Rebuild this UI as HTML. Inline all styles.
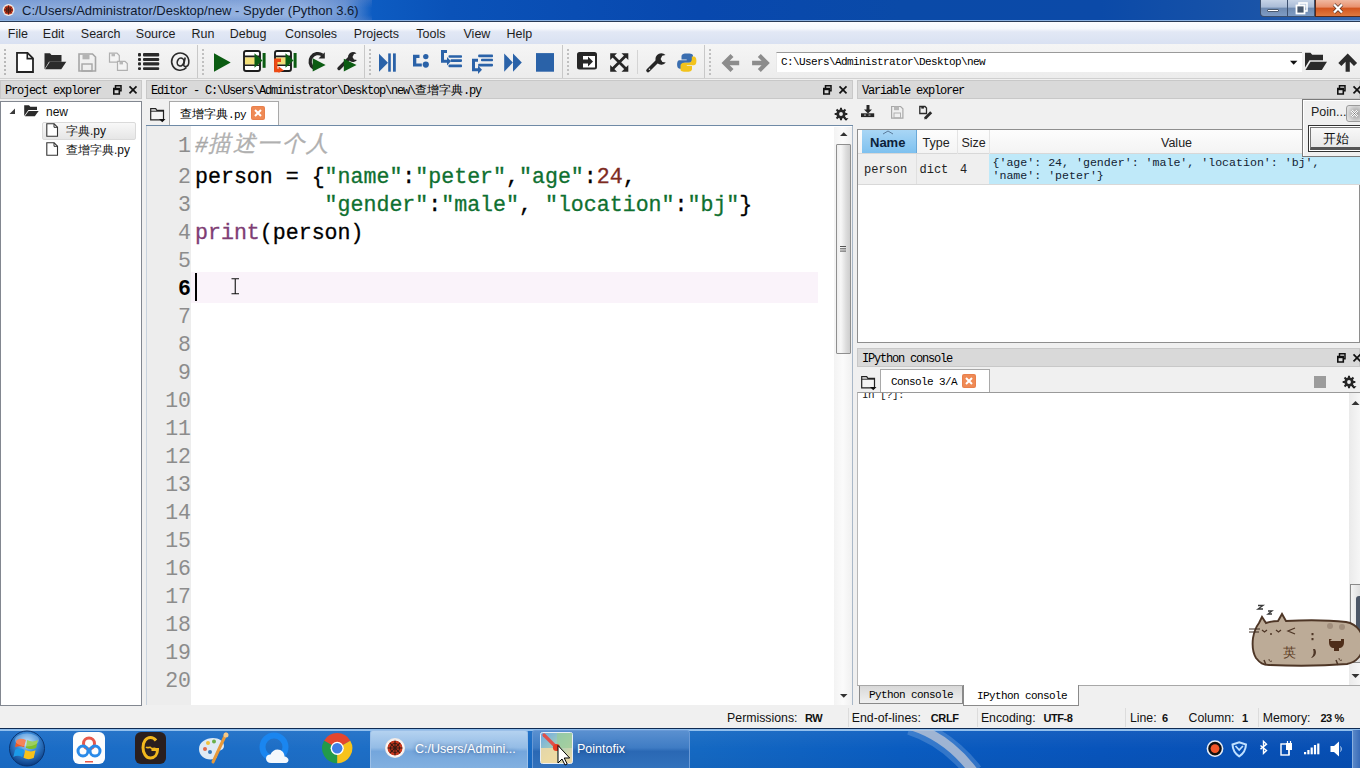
<!DOCTYPE html>
<html><head><meta charset="utf-8">
<style>
*{margin:0;padding:0;box-sizing:border-box}
html,body{width:1360px;height:768px;overflow:hidden;background:#f0f0f0;font-family:"Liberation Sans",sans-serif;font-size:13px;color:#000}
.a{position:absolute}
.mono{font-family:"Liberation Mono",monospace}
.serif{font-family:"Liberation Serif",serif}
svg{position:absolute;overflow:visible}
#title{left:0;top:0;width:1360px;height:21px;background:linear-gradient(90deg,#4a7cc8 0px,#3a72c4 300px,#0d5cc2 372px,#0a52b8 450px,#0848ae 700px,#0a4aa8 900px,#0b4aa8 1100px,#1a54a8 1260px,#3a68ac 1360px)}
#menu{left:0;top:22px;width:1360px;height:22px;background:linear-gradient(#fdfdff 0,#f6f8fc 30%,#e2e8f5 45%,#d9e1f2 100%)}
#tool{left:0;top:44px;width:1360px;height:35px;background:linear-gradient(#f5f5f5,#ececec);border-bottom:1px solid #d0d0d0}
.dh{height:19px;top:80px;background:#d9d9d9;border:1px solid #c8c8c8;font-family:"Liberation Mono",monospace;font-size:12px;letter-spacing:-1.2px;line-height:20px;padding-left:4px;color:#000;white-space:nowrap}
.panel{background:#fff;border:1px solid #828790}
.ln{left:147px;width:44px;text-align:right;font-size:21.5px;line-height:28px;white-space:pre}
.code{left:195px;font-size:21.6px;line-height:28px;white-space:pre;color:#000;-webkit-text-stroke:0.3px currentColor}
.vtxt{font-size:11.4px;line-height:13px;color:#222;white-space:nowrap}
.stt{top:711px;font-size:12.3px;color:#111;white-space:nowrap}
.stb{font-size:11px;font-weight:bold;top:712px;letter-spacing:-0.4px}
.menuitem{top:27px;font-size:12.5px;color:#1e1e1e;white-space:nowrap}
</style></head>
<body>
<div id="title" class="a"></div>
<div class="a" style="left:0;top:0;width:372px;height:20px;background:linear-gradient(90deg,rgba(150,178,222,.85) 0,rgba(165,190,230,.85) 300px,rgba(140,170,220,.7) 345px,rgba(120,160,220,0) 372px)"></div>
<div class="a" style="left:0;top:0;width:372px;height:20px;background:linear-gradient(rgba(90,130,200,.35),rgba(255,255,255,0) 40%,rgba(255,255,255,0) 75%,rgba(90,130,200,.3))"></div>
<div class="a" style="left:0;top:20px;width:1360px;height:1px;background:#8ab0e0"></div>
<div class="a" style="left:0;top:21px;width:1360px;height:1px;background:#283a55"></div>
<svg style="left:2px;top:4px" width="13" height="12"><circle cx="6.5" cy="6" r="6" fill="#f2ece8"/><circle cx="6.5" cy="6" r="4.6" fill="#c8381e"/><g stroke="#3a1a12" stroke-width=".8" fill="none"><path d="M6.5 1.4v9.2M1.9 6h9.2M3.2 2.7l6.6 6.6M9.8 2.7L3.2 9.3"/><circle cx="6.5" cy="6" r="2.4"/></g></svg>
<div class="a" style="left:22px;top:3px;font-size:13px;color:#0f1a30;white-space:nowrap">C:/Users/Administrator/Desktop/new - Spyder (Python 3.6)</div>
<div class="a" style="left:1260px;top:0;width:28px;height:17px;border:1px solid #3b4f6e;border-top:none;border-radius:0 0 0 4px;background:linear-gradient(#c6d3e6,#a9bbd6 45%,#6f8ab0 50%,#7e9cc4)"></div>
<div class="a" style="left:1267px;top:9px;width:12px;height:3px;background:#fff;border:1px solid #4a5a70;border-radius:1px"></div>
<div class="a" style="left:1288px;top:0;width:27px;height:17px;border:1px solid #3b4f6e;border-top:none;border-left:none;background:linear-gradient(#c6d3e6,#a9bbd6 45%,#6f8ab0 50%,#7e9cc4)"></div>
<svg style="left:1295px;top:2px" width="13" height="12"><rect x="4" y="1" width="8" height="8" fill="none" stroke="#fff" stroke-width="1.6"/><rect x="1.5" y="3.5" width="8" height="8" fill="#4a5a70" stroke="#fff" stroke-width="1.8"/><rect x="3.8" y="5.8" width="3.4" height="3.4" fill="#4a5a70"/></svg>
<div class="a" style="left:1315px;top:0;width:45px;height:17px;border:1px solid #5a2a1a;border-top:none;border-right:none;background:linear-gradient(#f0b8a0,#e8906c 45%,#d2541e 50%,#e07a40)"></div>
<svg style="left:1332px;top:3px" width="12" height="11"><path d="M2 1.5L10 9.5M10 1.5L2 9.5" stroke="#4a2a20" stroke-width="3.6"/><path d="M2 1.5L10 9.5M10 1.5L2 9.5" stroke="#fff" stroke-width="2.4"/></svg>
<div id="menu" class="a"></div>
<div class="a menuitem" style="left:7.800000000000001px">File</div>
<div class="a menuitem" style="left:42.8px">Edit</div>
<div class="a menuitem" style="left:80.8px">Search</div>
<div class="a menuitem" style="left:135.8px">Source</div>
<div class="a menuitem" style="left:191.5px">Run</div>
<div class="a menuitem" style="left:229.7px">Debug</div>
<div class="a menuitem" style="left:285.0px">Consoles</div>
<div class="a menuitem" style="left:353.8px">Projects</div>
<div class="a menuitem" style="left:416.3px">Tools</div>
<div class="a menuitem" style="left:463.5px">View</div>
<div class="a menuitem" style="left:506.5px">Help</div>
<div class="a" style="left:0;top:44px;width:1360px;height:1px;background:#c9cfd8"></div>
<div id="tool" class="a"></div>
<div class="a" style="left:776px;top:52px;width:526px;height:20px;background:#fff;border-top:1px solid #9a9a9a;border-left:1px solid #e8e8e8"></div>
<svg style="left:0;top:0" width="1360" height="80">
<g fill="#b8b8b8"><!-- grips -->
<rect x="4" y="49" width="2" height="2"/><rect x="4" y="53" width="2" height="2"/><rect x="4" y="57" width="2" height="2"/><rect x="4" y="61" width="2" height="2"/><rect x="4" y="65" width="2" height="2"/><rect x="4" y="69" width="2" height="2"/><rect x="4" y="73" width="2" height="2"/>
</g>
<g fill="#c0c0c0">
<rect x="202" y="49" width="2" height="2"/><rect x="202" y="53" width="2" height="2"/><rect x="202" y="57" width="2" height="2"/><rect x="202" y="61" width="2" height="2"/><rect x="202" y="65" width="2" height="2"/><rect x="202" y="69" width="2" height="2"/><rect x="202" y="73" width="2" height="2"/>
<rect x="369" y="49" width="2" height="2"/><rect x="369" y="53" width="2" height="2"/><rect x="369" y="57" width="2" height="2"/><rect x="369" y="61" width="2" height="2"/><rect x="369" y="65" width="2" height="2"/><rect x="369" y="69" width="2" height="2"/><rect x="369" y="73" width="2" height="2"/>
<rect x="567" y="49" width="2" height="2"/><rect x="567" y="53" width="2" height="2"/><rect x="567" y="57" width="2" height="2"/><rect x="567" y="61" width="2" height="2"/><rect x="567" y="65" width="2" height="2"/><rect x="567" y="69" width="2" height="2"/><rect x="567" y="73" width="2" height="2"/>
<rect x="709" y="49" width="2" height="2"/><rect x="709" y="53" width="2" height="2"/><rect x="709" y="57" width="2" height="2"/><rect x="709" y="61" width="2" height="2"/><rect x="709" y="65" width="2" height="2"/><rect x="709" y="69" width="2" height="2"/><rect x="709" y="73" width="2" height="2"/>
</g>
<g fill="#c8c8c8"><rect x="197" y="45" width="1" height="33"/><rect x="364" y="45" width="1" height="33"/><rect x="562" y="45" width="1" height="33"/><rect x="704" y="45" width="1" height="33"/><rect x="637" y="50" width="1" height="24" fill="#d4d4d4"/></g>
<!-- new file -->
<path d="M17 52.8h10.5l5.5 5.5v13.7h-16z" fill="#fff" stroke="#222" stroke-width="1.8" stroke-linejoin="miter"/>
<path d="M27.3 53v5.6h5.6" fill="none" stroke="#222" stroke-width="1.6"/>
<!-- open folder -->
<path d="M44.5 53.3h5.5l1.5 1.8h10v6.6h-12.5l-4.5 7.5z" fill="#2b2b2b"/>
<path d="M45 69.3l4.8-7.6h16.5l-5 7.6z" fill="#2b2b2b"/>
<!-- save disabled -->
<path d="M79 54h13.5l3 3v14h-16.5z" fill="none" stroke="#a6a6a6" stroke-width="1.6"/>
<rect x="82.5" y="54.5" width="7" height="4.8" fill="#b4b4b4"/>
<rect x="82" y="64" width="10" height="7" fill="none" stroke="#a6a6a6" stroke-width="1.4"/>
<!-- save all disabled -->
<path d="M109.5 53.2h7.5l2.3 2.3v6.7h-9.8z" fill="#f4f4f4" stroke="#b0b0b0" stroke-width="1.2"/>
<rect x="111.5" y="53.5" width="3.5" height="2.8" fill="#b8b8b8"/>
<path d="M117.5 61.3h7.5l2.3 2.3v6.7h-9.8z" fill="#f4f4f4" stroke="#b0b0b0" stroke-width="1.2"/>
<rect x="119.5" y="61.6" width="3.5" height="2.8" fill="#b8b8b8"/>
<!-- outline list -->
<g fill="#2a2a2a"><rect x="138" y="53" width="3" height="3.6" rx="1"/><rect x="143" y="53" width="16.2" height="3.6" rx="1"/>
<rect x="138" y="58.1" width="3" height="2.8" rx="1"/><rect x="143" y="58.1" width="16.2" height="2.8" rx="1"/>
<rect x="138" y="62.3" width="3" height="3.3" rx="1"/><rect x="143" y="62.3" width="16.2" height="3.3" rx="1"/>
<rect x="138" y="67.2" width="3" height="2.8" rx="1"/><rect x="143" y="67.2" width="16.2" height="2.8" rx="1"/></g>
<!-- @ -->
<path d="M186.5 67.5A8.6 8.6 0 1 1 188.8 62c0 3-1.5 4.6-3.3 4.6-1.5 0-2-1-1.7-2.6l1.4-6.5" fill="none" stroke="#2a2a2a" stroke-width="1.6"/><ellipse cx="180.6" cy="62" rx="3.3" ry="4" transform="rotate(20 180.6 62)" fill="none" stroke="#2a2a2a" stroke-width="1.6"/>
<!-- run -->
<path d="M214 53.3L230.7 62.5L214 71.8z" fill="#0b5c12"/>
<!-- run cell -->
<rect x="244" y="51" width="16" height="20" rx="2" fill="#fff" stroke="#1e1e1e" stroke-width="1.9"/>
<rect x="245" y="57.3" width="14" height="7.4" fill="#f3df79"/>
<path d="M244 56.4h16M244 65.3h16" stroke="#1e1e1e" stroke-width="1.6"/>
<path d="M254.5 53.3L262.5 60.5L254.5 67.8z" fill="#0b5c12"/><rect x="262.6" y="53" width="3" height="14.8" fill="#0b5c12"/>
<!-- run cell advance -->
<rect x="275" y="51" width="16" height="20" rx="2" fill="#fff" stroke="#1e1e1e" stroke-width="1.9"/>
<rect x="276" y="57.3" width="14" height="7.4" fill="#f3df79"/>
<path d="M275 56.4h16M275 65.3h16" stroke="#1e1e1e" stroke-width="1.6"/>
<path d="M285.5 53.3L293.5 60.5L285.5 67.8z" fill="#0b5c12"/><rect x="293.6" y="53" width="3" height="14.8" fill="#0b5c12"/>
<path d="M281 60.2h-5.2v10.3h4" fill="none" stroke="#ee4a14" stroke-width="3.4"/><path d="M278.5 66.2l5.5 4.3-5.5 2.2z" fill="#ee4a14"/>
<!-- rerun -->
<path d="M322.5 55A7.6 7.6 0 1 0 313.5 68" fill="none" stroke="#262626" stroke-width="3.3"/>
<path d="M318.5 58.5h6.3v-6.3z" fill="#262626"/>
<path d="M312.7 58.2L325.6 65L312.7 71.6z" fill="#0b5c12"/>
<!-- debug file (wrench + play) -->
<path d="M339 68.5L349 58.5" stroke="#262626" stroke-width="3.4" stroke-linecap="round"/>
<path d="M356.5 53.5a5 5 0 1 0 0.5 6.5l-3-0.5-1.5-2.5 1.5-3z" fill="#262626"/>
<path d="M343.8 58.7L356.5 65L343.8 71.6z" fill="#0b5c12"/>
<!-- debug -->
<g fill="#2a62a8">
<path d="M379 53.8L388 62.7L379 71.7z"/><rect x="388.2" y="53.4" width="2.6" height="18.3"/><rect x="393" y="53.4" width="2.8" height="18.3"/>
<!-- step -->
<path d="M413 54.8h6.5v3.2h-3.2v5.4h5.5v3.2h-8.8z"/><circle cx="425.8" cy="56.6" r="2.7"/><circle cx="425.8" cy="64.6" r="3.1"/>
<!-- step into -->
<path d="M441 50h6v3h-3v6.8h3v-2.8l4 4.3-4 4.3v-2.8h-6z"/>
<rect x="448.5" y="55.2" width="13.5" height="2.6" rx=".8"/><rect x="450.5" y="59.3" width="11.5" height="2.6" rx=".8"/><rect x="448.5" y="64.6" width="13.5" height="2.6" rx=".8"/>
<!-- step return -->
<rect x="478.2" y="54.6" width="14.8" height="2.6" rx=".8"/><rect x="481" y="58.7" width="12" height="2.6" rx=".8"/><rect x="478.2" y="63.8" width="14.8" height="2.6" rx=".8"/>
<path d="M472 58.8h6v3h-3v6.4h3v-2.8l4 4.3-4 4.3v-2.8h-6z"/>
<!-- continue -->
<path d="M504.2 53.4L512.8 62.5L504.2 71.7z"/><path d="M513 53.4L521.8 62.5L513 71.7z"/>
<!-- stop -->
<rect x="536" y="53.1" width="18" height="18.6"/>
</g>
<!-- maximize pane -->
<rect x="578" y="53" width="18" height="15.6" rx="1.5" fill="#fff" stroke="#262626" stroke-width="2"/>
<rect x="578" y="53" width="18" height="3" fill="#262626"/>
<rect x="578.5" y="55" width="4.5" height="13.5" fill="#262626"/>
<path d="M583 59.5h5v-3l5 5-5 5v-3h-5z" fill="#262626"/>
<!-- fullscreen -->
<g stroke="#262626" stroke-width="2.8" fill="none"><path d="M612.5 55.5l13.5 13.5M626 55.5l-13.5 13.5"/></g>
<g fill="#262626"><path d="M610.2 53.2h6.8l-6.8 6.8z"/><path d="M628.3 53.2v6.8l-6.8-6.8z"/><path d="M610.2 71.8v-6.8l6.8 6.8z"/><path d="M628.3 71.8h-6.8l6.8-6.8z"/></g>
<!-- wrench -->
<path d="M648 70.5L657 61.5" stroke="#262626" stroke-width="3.6" stroke-linecap="round"/>
<path d="M665.5 55a5.8 5.8 0 1 0 0.3 7.5l-3.4-0.6-1.8-2.8 1.6-3.4z" fill="#262626"/>
<circle cx="649.5" cy="69.2" r=".8" fill="#ddd"/>
<!-- python -->
<path d="M686.5 53.6c-4.5 0-5 1.8-5 3.4v2.4h5.2v.8h-7.2c-2 0-2.4 2.4-2.4 4.4 0 2.3.8 4.2 2.6 4.2h2v-2.8c0-2 1.7-3.3 3.3-3.3h5c1.6 0 3-1.4 3-3v-3.8c0-1.7-1.7-2.3-6.5-2.3z" fill="#3a6eb0"/>
<path d="M687 71.8c4.5 0 5-1.8 5-3.4v-2.4h-5.2v-.8h7.2c2 0 2.4-2.4 2.4-4.4 0-2.3-.8-4.2-2.6-4.2h-2v2.8c0 2-1.7 3.3-3.3 3.3h-5c-1.6 0-3 1.4-3 3v3.8c0 1.7 1.7 2.3 6.5 2.3z" fill="#f2c31c"/>
<!-- back/forward -->
<path d="M730.5 54l-9 9 9 9 3-3-3.8-3.8h9.5v-4.4h-9.5l3.8-3.8z" fill="#8c8c8c"/>
<path d="M760.8 54l9 9-9 9-3-3 3.8-3.8h-9.5v-4.4h9.5l-3.8-3.8z" fill="#8c8c8c"/>
<!-- combo arrow -->
<path d="M1290 60.8h7.4l-3.7 3.9z" fill="#111"/>
<!-- open folder right -->
<path d="M1305 52.8h5.5l1.7 2h10.8v5.5h-13.5l-4.5 7.2z" fill="#2b2b2b"/>
<path d="M1305.5 70l5-8.2h16.5l-5.2 8.2z" fill="#2b2b2b"/>
<!-- up arrow -->
<path d="M1347.7 53.5l-9.4 9.4 3.1 3.1 4.2-4.2v10h4.2v-10l4.2 4.2 3.1-3.1z" fill="#2b2b2b"/>
</svg>
<div class="a mono" style="left:781px;top:56px;font-size:11px;letter-spacing:-0.6px;color:#000;white-space:nowrap;line-height:12px">C:\Users\Administrator\Desktop\new</div>

<!-- dock headers -->
<div class="a dh" style="left:0;width:142px">Project explorer</div>
<div class="a dh" style="left:146px;width:707px">Editor - C:\Users\Administrator\Desktop\new\<span style="font-size:12.3px;letter-spacing:0">查增字典</span>.py</div>
<div class="a dh" style="left:857px;width:503px">Variable explorer</div>
<div class="a dh" style="left:857px;top:348px;width:503px">IPython console</div>

<!-- project explorer -->
<svg style="left:113px;top:85px" width="26" height="10"><path d="M2.5 0.8h5.5v5h-5.5z" fill="none" stroke="#111" stroke-width="1.5"/><path d="M0.8 3.5h5.5v5.5h-5.5z" fill="#d9d9d9" stroke="#111" stroke-width="1.6"/><path d="M0.8 4.3h5.5" stroke="#111" stroke-width="1.8"/><path d="M16.5 1.3l7 7M23.5 1.3l-7 7" stroke="#111" stroke-width="1.7"/></svg>
<svg style="left:823px;top:85px" width="26" height="10"><path d="M2.5 0.8h5.5v5h-5.5z" fill="none" stroke="#111" stroke-width="1.5"/><path d="M0.8 3.5h5.5v5.5h-5.5z" fill="#d9d9d9" stroke="#111" stroke-width="1.6"/><path d="M0.8 4.3h5.5" stroke="#111" stroke-width="1.8"/><path d="M16.5 1.3l7 7M23.5 1.3l-7 7" stroke="#111" stroke-width="1.7"/></svg>
<svg style="left:1337px;top:85px" width="26" height="10"><path d="M2.5 0.8h5.5v5h-5.5z" fill="none" stroke="#111" stroke-width="1.5"/><path d="M0.8 3.5h5.5v5.5h-5.5z" fill="#d9d9d9" stroke="#111" stroke-width="1.6"/><path d="M0.8 4.3h5.5" stroke="#111" stroke-width="1.8"/><path d="M16.5 1.3l7 7M23.5 1.3l-7 7" stroke="#111" stroke-width="1.7"/></svg>
<svg style="left:1337px;top:353px" width="26" height="10"><path d="M2.5 0.8h5.5v5h-5.5z" fill="none" stroke="#111" stroke-width="1.5"/><path d="M0.8 3.5h5.5v5.5h-5.5z" fill="#d9d9d9" stroke="#111" stroke-width="1.6"/><path d="M0.8 4.3h5.5" stroke="#111" stroke-width="1.8"/><path d="M16.5 1.3l7 7M23.5 1.3l-7 7" stroke="#111" stroke-width="1.7"/></svg>
<div class="a panel" style="left:0;top:101px;width:142px;height:605px"></div>
<svg style="left:9px;top:108px" width="7" height="7"><path d="M6 0.5V6H0.5z" fill="#3a3a3a"/></svg>
<svg style="left:24px;top:105px" width="16" height="12"><path d="M0.2 0.2h4.8l1.3 1.6h6.7v3.2h-8.6l-4.2 6z" fill="#2b2b2b"/><path d="M0.8 11.2l3.9-5.2h10l-3.9 5.2z" fill="#2b2b2b"/></svg>
<div class="a" style="left:46px;top:105px;font-size:12px;color:#111">new</div>
<div class="a" style="left:42px;top:121.5px;width:94px;height:18px;border:1px solid #dadada;border-radius:2px;background:linear-gradient(#f8f8f8,#e6e6e6)"></div>
<svg style="left:46px;top:123px" width="13" height="14"><path d="M0.8 0.8h7.3l3.4 3.4v9h-10.7z" fill="#fff" stroke="#333" stroke-width="1.1"/><path d="M8 0.8v3.5h3.5" fill="none" stroke="#333" stroke-width="1"/></svg>
<div class="a" style="left:66px;top:123px;font-size:12px;color:#111;white-space:nowrap">字典.py</div>
<svg style="left:46px;top:142px" width="13" height="14"><path d="M0.8 0.8h7.3l3.4 3.4v9h-10.7z" fill="#fff" stroke="#333" stroke-width="1.1"/><path d="M8 0.8v3.5h3.5" fill="none" stroke="#333" stroke-width="1"/></svg>
<div class="a" style="left:66px;top:142px;font-size:12px;color:#111;white-space:nowrap">查增字典.py</div>

<!-- editor -->
<!-- editor tab bar -->
<svg style="left:150px;top:108px" width="16" height="14"><path d="M0.7 0.7h5l1.2 1.6h6.6v9.5h-12.8z" fill="#f4f4f4" stroke="#222" stroke-width="1.2"/><path d="M0.7 3.2h12.8" stroke="#222" stroke-width="1"/><path d="M9 11h6.5l-3.25 3.3z" fill="#111"/></svg>
<div class="a" style="left:169px;top:101px;width:110px;height:25px;background:#fff;border:1px solid #a9a9a9;border-bottom:none"></div>
<div class="a" style="left:180px;top:106px;font-size:12px;color:#000;white-space:nowrap">查增字典<span class="mono" style="font-size:11px;letter-spacing:-0.6px">.py</span></div>
<svg style="left:251px;top:106px" width="14" height="14"><rect x="0" y="0" width="14" height="14" rx="2" fill="#e9804c"/><rect x="1" y="1" width="12" height="12" rx="1.5" fill="#ef8a55"/><path d="M4 4l6 6M10 4l-6 6" stroke="#fff" stroke-width="2"/></svg>
<div class="a" style="left:146px;top:124.5px;width:707px;height:2px;background:#6f8aa6"></div>
<svg style="left:835px;top:108px" width="14" height="14"><path d="M10.57 4.90 L12.33 5.02 L12.33 6.98 L10.57 7.10 L10.01 8.46 L11.16 9.78 L9.78 11.16 L8.46 10.01 L7.10 10.57 L6.98 12.33 L5.02 12.33 L4.90 10.57 L3.54 10.01 L2.22 11.16 L0.84 9.78 L1.99 8.46 L1.43 7.10 L-0.33 6.98 L-0.33 5.02 L1.43 4.90 L1.99 3.54 L0.84 2.22 L2.22 0.84 L3.54 1.99 L4.90 1.43 L5.02 -0.33 L6.98 -0.33 L7.10 1.43 L8.46 1.99 L9.78 0.84 L11.16 2.22 L10.01 3.54Z M7.90 6.00 A1.9 1.9 0 1 0 4.10 6.00 A1.9 1.9 0 1 0 7.90 6.00Z" fill="#262626" fill-rule="evenodd"/><path d="M8.5 10.2h5l-2.5 2.6z" fill="#111"/></svg>
<!-- editor body -->
<div class="a" style="left:146px;top:126px;width:707px;height:579px;background:#fff;border-left:1px solid #c9d3de;border-right:1px solid #a9b8c8"></div>
<div class="a" style="left:147px;top:126px;width:44px;height:579px;background:#ededed"></div>
<div class="a" style="left:191px;top:272px;width:627px;height:30.5px;background:#faf3fa"></div>
<div class="a" style="left:195px;top:273px;width:2px;height:28px;background:#000"></div>
<!-- I-beam -->
<svg style="left:231px;top:278px" width="9" height="17"><path d="M0.5 0.7h7.5M0.5 15.7h7.5M4.25 0.7v15" stroke="#111" stroke-width="1.1" fill="none"/></svg>
<!-- scrollbar -->
<div class="a" style="left:834px;top:127px;width:18px;height:578px;background:linear-gradient(90deg,#f3f3f3,#fbfbfb 50%,#f0f0f0)"></div>
<svg style="left:839px;top:131px" width="10" height="6"><path d="M1 5h7.5L4.75 1.2z" fill="#333"/></svg>
<div class="a" style="left:835.5px;top:143.5px;width:15.5px;height:210.5px;border:1px solid #8f8f8f;border-radius:1px;background:linear-gradient(90deg,#eeeeee,#f7f7f7 30%,#dcdcdc 70%,#cdcdcd)"></div>
<svg style="left:839px;top:245px" width="9" height="8"><path d="M1 1.5h6M1 3.8h6M1 6.1h6" stroke="#555" stroke-width="1"/></svg>
<svg style="left:839px;top:693px" width="10" height="6"><path d="M1 1h7.5L4.75 4.8z" fill="#333"/></svg>
<div class="a mono ln" style="top:131.8px;color:#8c8c8c">1</div>
<div class="a mono ln" style="top:163.0px;color:#8c8c8c">2</div>
<div class="a mono ln" style="top:191.0px;color:#8c8c8c">3</div>
<div class="a mono ln" style="top:219.0px;color:#8c8c8c">4</div>
<div class="a mono ln" style="top:247.0px;color:#8c8c8c">5</div>
<div class="a mono ln" style="top:275.0px;color:#000;font-weight:bold">6</div>
<div class="a mono ln" style="top:303.0px;color:#8c8c8c">7</div>
<div class="a mono ln" style="top:331.0px;color:#8c8c8c">8</div>
<div class="a mono ln" style="top:359.0px;color:#8c8c8c">9</div>
<div class="a mono ln" style="top:387.0px;color:#8c8c8c">10</div>
<div class="a mono ln" style="top:415.0px;color:#8c8c8c">11</div>
<div class="a mono ln" style="top:443.0px;color:#8c8c8c">12</div>
<div class="a mono ln" style="top:471.0px;color:#8c8c8c">13</div>
<div class="a mono ln" style="top:499.0px;color:#8c8c8c">14</div>
<div class="a mono ln" style="top:527.0px;color:#8c8c8c">15</div>
<div class="a mono ln" style="top:555.0px;color:#8c8c8c">16</div>
<div class="a mono ln" style="top:583.0px;color:#8c8c8c">17</div>
<div class="a mono ln" style="top:611.0px;color:#8c8c8c">18</div>
<div class="a mono ln" style="top:639.0px;color:#8c8c8c">19</div>
<div class="a mono ln" style="top:667.0px;color:#8c8c8c">20</div>
<div class="a mono code" style="top:131.8px;color:#a8a8a8;font-style:italic">#<span style="font-size:22.5px;letter-spacing:1.5px;color:#b0b0b0;position:relative;top:-0.5px;left:0.5px">描述一个人</span></div>
<div class="a mono code" style="top:163.0px">person = {<span style="color:#0f7030">"name"</span>:<span style="color:#0f7030">"peter"</span>,<span style="color:#0f7030">"age"</span>:<span style="color:#7d2a1e">24</span>,</div>
<div class="a mono code" style="top:191.0px">          <span style="color:#0f7030">"gender"</span>:<span style="color:#0f7030">"male"</span>, <span style="color:#0f7030">"location"</span>:<span style="color:#0f7030">"bj"</span>}</div>
<div class="a mono code" style="top:219.0px"><span style="color:#7e3d74">print</span>(person)</div>

<!-- variable explorer -->
<!-- var explorer toolbar -->
<svg style="left:860px;top:104px" width="80" height="16">
<path d="M6.5 1h3v4.5h2.5l-4 4-4-4h2.5z" fill="#262626"/><rect x="1" y="9.3" width="13.2" height="3.8" fill="#262626"/><rect x="4" y="10.3" width="2" height="1.6" fill="#888"/><rect x="8.5" y="10.3" width="2" height="1.6" fill="#888"/>
<path d="M31.6 2.5h9l2.3 2.3v9.3h-11.3z" fill="none" stroke="#a8a8a8" stroke-width="1.2"/><rect x="34" y="2.6" width="5" height="3.6" fill="#b8b8b8"/><rect x="34" y="9" width="6.5" height="4.8" fill="none" stroke="#b0b0b0" stroke-width="1"/>
<path d="M59.8 2.5h5.2l1.5 1.5v5.5h-6.7z" fill="none" stroke="#2a2a2a" stroke-width="1.3"/><rect x="61.3" y="2" width="2.6" height="2.6" fill="#2a2a2a"/>
<path d="M65 14.5l6.2-6.2" stroke="#2a2a2a" stroke-width="2.8" stroke-linecap="butt"/><path d="M64 15.5l1.2-2.6 1.4 1.4z" fill="#2a2a2a"/>
</svg>
<div class="a panel" style="left:857px;top:128.5px;width:503px;height:214.5px;border-color:#8e8e8e"></div>
<div class="a" style="left:858px;top:129.5px;width:502px;height:24px;background:linear-gradient(#fdfdfd,#f3f3f3)"></div>
<div class="a" style="left:862px;top:129.5px;width:55px;height:24px;background:linear-gradient(#a9d6f5,#7cc0ef);border-right:1px solid #6aa8d8"></div>
<div class="a" style="left:858px;top:153px;width:502px;height:1px;background:#d8d8d8"></div>
<div class="a" style="left:957px;top:130px;width:1px;height:54px;background:#e4e4e4"></div>
<div class="a" style="left:989px;top:130px;width:1px;height:24px;background:#e4e4e4"></div>
<svg style="left:882px;top:130px" width="12" height="5"><path d="M1 4l5-3 5 3" fill="none" stroke="#5a7a9a" stroke-width="1"/></svg>
<div class="a" style="left:870px;top:135px;font-size:13px;font-weight:bold;color:#0c1f3a">Name</div>
<div class="a" style="left:922.5px;top:136px;font-size:12.5px;color:#222">Type</div>
<div class="a" style="left:961.5px;top:136px;font-size:12.5px;color:#222">Size</div>
<div class="a" style="left:1161px;top:136px;font-size:12.5px;color:#222">Value</div>
<div class="a" style="left:858px;top:154px;width:131px;height:30px;background:#efefef"></div>
<div class="a" style="left:916px;top:154px;width:1px;height:30px;background:#e0e0e0"></div>
<div class="a" style="left:989px;top:154px;width:371px;height:30px;background:#bfe9f9"></div>
<div class="a" style="left:858px;top:184px;width:502px;height:1px;background:#d8d8d8"></div>
<div class="a mono vtxt" style="left:864px;top:164px;font-size:12px">person</div>
<div class="a mono vtxt" style="left:919.5px;top:164px;font-size:12px">dict</div>
<div class="a mono vtxt" style="left:960px;top:164px;font-size:12px">4</div>
<div class="a mono vtxt" style="left:992.5px;top:155.5px;color:#123;font-size:11.6px;line-height:13.4px">{'age': 24, 'gender': 'male', 'location': 'bj',<br>'name': 'peter'}</div>
<!-- pointofix -->
<div class="a" style="left:1302px;top:99px;width:60px;height:58px;background:#f0f0f0;border:1px solid #7a7a7a;box-shadow:inset 1px 1px 0 #fff"></div>
<div class="a" style="left:1311px;top:105px;font-size:12.5px;color:#222;white-space:nowrap">Poin...</div>
<div class="a" style="left:1345.5px;top:104.5px;width:20px;height:17.5px;border:1px solid #9a9a9a;border-radius:3px;background:radial-gradient(circle at 50% 50%,#9a9a9a,#d8d8d8 70%,#e8e8e8)"></div>
<svg style="left:1350px;top:109px" width="9" height="9"><path d="M1.5 1.5l6 6M7.5 1.5l-6 6" stroke="#fff" stroke-width="2.2"/><path d="M1.5 1.5l6 6M7.5 1.5l-6 6" stroke="#555" stroke-width=".6"/></svg>
<div class="a" style="left:1308px;top:125px;width:56px;height:26.5px;border:1px solid #333;background:#fff"></div>
<div class="a" style="left:1310px;top:127px;width:54px;height:22.5px;border:1px solid #777;border-bottom:3px solid #555;background:linear-gradient(#f8f8f8,#e8e8e8)"></div>
<div class="a" style="left:1323px;top:130px;font-size:13px;color:#111;white-space:nowrap">开始</div>

<!-- console -->
<!-- console tab bar -->
<svg style="left:861px;top:376px" width="16" height="14"><path d="M0.7 0.7h5l1.2 1.6h6.6v9.5h-12.8z" fill="#f4f4f4" stroke="#222" stroke-width="1.2"/><path d="M0.7 3.2h12.8" stroke="#222" stroke-width="1"/><path d="M9 11h6.5l-3.25 3.3z" fill="#111"/></svg>
<div class="a" style="left:880px;top:369px;width:110px;height:25px;background:#fff;border:1px solid #a9a9a9;border-bottom:none"></div>
<div class="a mono" style="left:891px;top:375px;font-size:11px;letter-spacing:-0.6px;color:#000;white-space:nowrap;line-height:14px">Console 3/A</div>
<svg style="left:962px;top:374px" width="14" height="14"><rect x="0" y="0" width="14" height="14" rx="2" fill="#e9804c"/><rect x="1" y="1" width="12" height="12" rx="1.5" fill="#ef8a55"/><path d="M4 4l6 6M10 4l-6 6" stroke="#fff" stroke-width="2"/></svg>
<div class="a" style="left:1314px;top:376px;width:12px;height:12px;background:#9c9c9c"></div>
<svg style="left:1343px;top:376px" width="14" height="14"><path d="M10.57 4.90 L12.33 5.02 L12.33 6.98 L10.57 7.10 L10.01 8.46 L11.16 9.78 L9.78 11.16 L8.46 10.01 L7.10 10.57 L6.98 12.33 L5.02 12.33 L4.90 10.57 L3.54 10.01 L2.22 11.16 L0.84 9.78 L1.99 8.46 L1.43 7.10 L-0.33 6.98 L-0.33 5.02 L1.43 4.90 L1.99 3.54 L0.84 2.22 L2.22 0.84 L3.54 1.99 L4.90 1.43 L5.02 -0.33 L6.98 -0.33 L7.10 1.43 L8.46 1.99 L9.78 0.84 L11.16 2.22 L10.01 3.54Z M7.90 6.00 A1.9 1.9 0 1 0 4.10 6.00 A1.9 1.9 0 1 0 7.90 6.00Z" fill="#262626" fill-rule="evenodd"/><path d="M8.5 10.2h5l-2.5 2.6z" fill="#111"/></svg>
<div class="a" style="left:857px;top:392px;width:503px;height:294px;background:#fff;border-top:1px solid #9a9a9a;border-left:1px solid #b8b8b8;border-bottom:1px solid #a8a8a8"></div>
<div class="a" style="left:858px;top:393px;width:492px;height:8px;overflow:hidden"><div class="a mono" style="left:4px;top:-5.5px;font-size:11px;letter-spacing:-0.6px;color:#222;line-height:14px">In [?]:</div></div>
<!-- console scrollbar -->
<div class="a" style="left:1349px;top:393px;width:11px;height:292px;background:linear-gradient(90deg,#eaeaea,#f6f6f6)"></div>
<svg style="left:1351px;top:400px" width="9" height="6"><path d="M0.5 5h8L4.5 1z" fill="#333"/></svg>
<div class="a" style="left:1349.5px;top:584px;width:12px;height:79px;border:1px solid #8a8a8a;background:linear-gradient(90deg,#f4f4f4,#dcdcdc)"></div>
<div class="a" style="left:1356px;top:596px;width:5px;height:55px;background:#4c5666;border-radius:3px 0 0 3px"></div>
<svg style="left:1351px;top:673px" width="9" height="6"><path d="M0.5 1h8L4.5 5z" fill="#333"/></svg>
<!-- pusheen -->
<svg style="left:1245px;top:598px" width="115" height="74">
<path d="M13 7.5h5l-5 3.5h5M23 13h4l-4 3h4" fill="none" stroke="#3a3a3a" stroke-width="1.3"/>
<path d="M11 60c-3-5-4-12-3-20 1-6 3-11 6-15l3-6 4 6c3-1 7-2 12-2l4-7 4 7c18-1 42-1 60 1 12 2 18 12 17 24-1 11-7 16-16 18-25 2-55 2-78 1-6 0-9-2-13-7z" fill="#bcab97" stroke="#4e3626" stroke-width="1.9"/>
<path d="M21 67l-2-5M93 67l-2-5" stroke="#4e3626" stroke-width="1.5"/>
<path d="M4 31h11M4 34h10" stroke="#3a2a20" stroke-width="1"/>
<path d="M17 32l2.5 2 2.5-2M31 32l2.5 2 2.5-2M50 30l-7 3 7 3" fill="none" stroke="#4e3626" stroke-width="1.3"/>
<circle cx="26" cy="36" r="1" fill="#4e3626"/>
<rect x="66.5" y="35" width="2" height="2.2" fill="#4e3626"/><rect x="66.5" y="40" width="2" height="2.2" fill="#4e3626"/>
<path d="M70 51c2 3 1 8-4 9 3-3 3-6 2-9z" fill="#4e3626"/>
<path d="M85 43h11v-2h3v3c0 4-2 6-5 6v3h-5v-3c-3 0-5-2-5-6v-3h3z" fill="#4e2e1a"/>
<circle cx="85" cy="28" r="3" fill="#8f7c6a" opacity=".6"/><circle cx="97" cy="29" r="3" fill="#8f7c6a" opacity=".6"/>
<path d="M24 61c0 2 1 3 3 2M94 60c0 2 1 3 3 2" fill="none" stroke="#4e3626" stroke-width=".9"/>
<text x="38" y="59" font-family="Liberation Sans" font-size="13" fill="#5e3e26">英</text>
</svg>
<!-- bottom tabs -->
<div class="a" style="left:859px;top:686px;width:104px;height:18px;border:1px solid #8a8a8a;border-top:none;background:linear-gradient(#d8d8d8,#f0f0f0)"></div>
<div class="a mono" style="left:869px;top:689px;font-size:11px;letter-spacing:-0.6px;color:#000;line-height:12px;white-space:nowrap">Python console</div>
<div class="a" style="left:963px;top:685px;width:116px;height:21px;border:1px solid #8a8a8a;border-top:none;background:#fff"></div>
<div class="a mono" style="left:977px;top:690px;font-size:11px;letter-spacing:-0.6px;color:#000;line-height:12px;white-space:nowrap">IPython console</div>

<!-- status -->
<div id="status" class="a" style="left:0;top:706px;width:1360px;height:22px;background:#f0f0f0"></div>
<div class="a stt" style="left:727.1px">Permissions:</div><div class="a stt stb" style="left:805.0px">RW</div>
<div class="a stt" style="left:851.8px">End-of-lines:</div><div class="a stt stb" style="left:930.8px">CRLF</div>
<div class="a stt" style="left:980.9px">Encoding:</div><div class="a stt stb" style="left:1043.4px">UTF-8</div>
<div class="a stt" style="left:1129.9px">Line:</div><div class="a stt stb" style="left:1161.9px">6</div>
<div class="a stt" style="left:1188.6px">Column:</div><div class="a stt stb" style="left:1242.1px">1</div>
<div class="a stt" style="left:1262.7px">Memory:</div><div class="a stt stb" style="left:1320.4px">23 %</div>
<div class="a" style="left:848px;top:708px;width:1px;height:19px;background:#dcdcdc"></div>
<div class="a" style="left:977px;top:708px;width:1px;height:19px;background:#dcdcdc"></div>
<div class="a" style="left:1125px;top:708px;width:1px;height:19px;background:#dcdcdc"></div>
<div class="a" style="left:1258px;top:708px;width:1px;height:19px;background:#dcdcdc"></div>
<!-- taskbar -->
<div id="task" class="a" style="left:0;top:728px;width:1360px;height:40px;background:linear-gradient(90deg,#1a6cc6 0,#1d6ec6 360px,#1468c2 700px,#0a5cc0 900px,#0854bb 1100px,#074eb2 1360px)"></div>
<div class="a" style="left:0;top:728px;width:1360px;height:1px;background:#0e2a52"></div>
<div class="a" style="left:0;top:729px;width:1360px;height:1.5px;background:#8cbcec"></div>
<div class="a" style="left:0;top:730px;width:1360px;height:38px;background:linear-gradient(rgba(255,255,255,.06),rgba(255,255,255,0) 50%,rgba(0,0,0,.03))"></div>
<svg style="left:860px;top:730px;overflow:hidden" width="160" height="38"><path d="M50 -4C72 3 95 18 114 42" fill="none" stroke="rgba(150,185,230,.3)" stroke-width="18"/><path d="M52 -4C74 3 96 18 114 42" fill="none" stroke="rgba(185,195,212,.8)" stroke-width="9"/></svg>
<div class="a" style="left:1352px;top:730px;width:8px;height:38px;background:linear-gradient(90deg,#5a88c8,#3a6cb8);border-left:1px solid #8ab0e0"></div>
<!-- start orb -->
<svg style="left:7px;top:729px" width="40" height="39">
<defs><radialGradient id="orb" cx="50%" cy="35%" r="65%"><stop offset="0" stop-color="#b8dcf8"/><stop offset=".45" stop-color="#3a8ad8"/><stop offset="1" stop-color="#0a3a80"/></radialGradient></defs>
<circle cx="20" cy="19.5" r="17.5" fill="url(#orb)" stroke="#0a3470" stroke-width="1"/>
<g transform="translate(19.5 19.5) scale(1.2) translate(-19.5 -19.5)"><path d="M11 13c2-2 5-2 8-0.5l-1.5 6c-2.5-1.2-5-1.2-7.5 0z" fill="#f05a22"/>
<path d="M20 12.5c3 1.5 6 1.5 9 0l-1.5 6.5c-3 1.4-6 1.2-8.5-0.2z" fill="#7cc02a"/>
<path d="M10 20.5c2.5-1.2 5-1.2 7.5 0l-1.5 6c-2.5-1.3-5-1.2-7.5 0z" fill="#1c9ae8"/>
<path d="M18.5 20.8c3 1.4 6 1.5 8.5 0.2l-1.5 6.5c-3 1.4-6 1.2-8.5-0.2z" fill="#f8c21a"/>
</g><ellipse cx="20" cy="11" rx="12" ry="6.5" fill="rgba(255,255,255,.25)"/>
</svg>
<!-- baidu netdisk -->
<div class="a" style="left:73px;top:731.5px;width:31.5px;height:32.5px;border-radius:6px;background:#fdfdfd"></div>
<svg style="left:73px;top:731px" width="32" height="33"><circle cx="16" cy="12.5" r="5.5" fill="none" stroke="#e8584a" stroke-width="3"/><circle cx="10" cy="20" r="5" fill="none" stroke="#2a8ae8" stroke-width="3"/><circle cx="22" cy="20" r="5" fill="none" stroke="#2a8ae8" stroke-width="3"/><rect x="12" y="30" width="8" height="1.5" fill="#e8584a"/></svg>
<!-- game -->
<div class="a" style="left:135px;top:731.5px;width:31px;height:32.5px;border-radius:6px;background:#2a1f1f"></div>
<svg style="left:135px;top:731px" width="32" height="33"><path d="M21 9.5c-1.5-2-3.5-3-5.5-3-4.5 0-7.5 4.5-7.5 10s3 10.5 7.5 10.5c4.2 0 7-3.5 7-8.5h-6" fill="none" stroke="#f2b81e" stroke-width="3"/><path d="M11 16c2 2 4-1 5 1s3-1 5 1" fill="none" stroke="#f2b81e" stroke-width="1.6"/></svg>
<!-- paint -->
<svg style="left:196px;top:732px" width="34" height="32"><path d="M3 17c0-7 7-11 14-11 6 0 11 3 11 8 0 4-4 4-6 6-2 2 1 6-4 7-8 2-15-3-15-10z" fill="#dfeaf4"/><circle cx="9" cy="17" r="2" fill="#e26a4a"/><circle cx="12" cy="11" r="2" fill="#f2c23a"/><circle cx="18" cy="9.5" r="2" fill="#6ab04a"/><circle cx="14" cy="20" r="2" fill="#3a7ab8"/><path d="M30 2l-13 28" stroke="#e89a3a" stroke-width="3" stroke-linecap="round"/><circle cx="30" cy="3" r="2.5" fill="#f4c88a"/></svg>
<!-- cloud q -->
<svg style="left:258px;top:732px" width="33" height="32"><circle cx="16" cy="15" r="11.5" fill="none" stroke="#1a86f0" stroke-width="6"/><path d="M13 31c-3 0-5-2-5-4.5s2-4 4.5-4c1-3 4-5 7-5 4 0 7 3 7 7 2 0 4 2 4 3.5s-1 3-3 3z" fill="#f4f8fc"/></svg>
<!-- chrome -->
<svg style="left:322px;top:733px" width="31" height="31"><g transform="translate(15.2,15.3)"><path d="M0 0L13.1-7.5A15 15 0 0 0-13.1-7.5z" fill="#e4462e"/><path d="M0 0L-13.1-7.5A15 15 0 0 0 0 15z" fill="#229a4a"/><path d="M0 0L0 15A15 15 0 0 0 13.1-7.5z" fill="#f7c31c"/><circle r="6.6" fill="#fff"/><circle r="5.2" fill="#3f7ee6"/></g></svg>
<!-- task buttons -->
<div class="a" style="left:370px;top:730px;width:158px;height:38px;border:1px solid #9cc0e8;border-bottom:none;border-radius:3px 3px 0 0;background:linear-gradient(#b4d2f0,#94bce6 45%,#74a6dc 55%,#82b0e0)"></div>
<svg style="left:384px;top:737px" width="22" height="22"><circle cx="11" cy="11" r="10" fill="#f4ece6"/><circle cx="11" cy="11" r="8.2" fill="#c8381e"/><g stroke="#3a1a12" stroke-width="1.2" fill="none"><path d="M11 2.8v16.4M2.8 11h16.4M5.2 5.2l11.6 11.6M16.8 5.2L5.2 16.8"/><circle cx="11" cy="11" r="4.5"/></g><circle cx="11" cy="11" r="8.2" fill="none" stroke="#fff" stroke-width="1.2"/></svg>
<div class="a" style="left:415px;top:741.5px;font-size:12.5px;color:#fff;white-space:nowrap;text-shadow:0 0 4px rgba(0,30,80,.6)">C:/Users/Admini...</div>
<div class="a" style="left:532px;top:730px;width:158px;height:38px;border:1px solid #6a9ad6;border-bottom:none;border-radius:3px 3px 0 0;background:linear-gradient(#5a90d0,#3f7cc4 45%,#2a68b4 55%,#3272bc)"></div>
<svg style="left:540px;top:732px" width="34" height="32"><defs><linearGradient id="pf1" x1="0" y1="0" x2="1" y2="1"><stop offset="0" stop-color="#6aa8e8"/><stop offset=".5" stop-color="#a8d0b8"/><stop offset="1" stop-color="#f8d8a0"/></linearGradient></defs><rect x="0.5" y="0.5" width="32" height="31" rx="2" fill="url(#pf1)" stroke="#e8eef6" stroke-width="1"/><rect x="17" y="1" width="15" height="15" fill="#98cc98" opacity=".7"/><rect x="1" y="16" width="16" height="15" fill="#fadca0" opacity=".8"/><path d="M4 3l12 12" stroke="#e0504a" stroke-width="3.2" stroke-linecap="round"/><circle cx="16.5" cy="15.5" r="3.6" fill="#e83a22"/><path d="M18 13.5v17.5l4-4 3 6 2.2-1-3-6h5.5z" fill="#fff" stroke="#000" stroke-width="1"/></svg>
<div class="a" style="left:577px;top:741.5px;font-size:12.5px;color:#fff;white-space:nowrap;text-shadow:0 0 4px rgba(0,30,80,.6)">Pointofix</div>
<!-- tray -->
<svg style="left:1200px;top:736px" width="150" height="26">
<circle cx="15" cy="12.6" r="7.6" fill="#111" stroke="#e8eef8" stroke-width="1.6"/><circle cx="15" cy="12.6" r="4.4" fill="#f2562a"/>
<path d="M32.5 8.5l6.7-2.3 6.8 2.3c-.3 6-3 9.5-6.8 11.8-3.8-2.3-6.4-5.8-6.7-11.8z" fill="none" stroke="#bfe0ff" stroke-width="2"/><path d="M35.5 10l3.7 4 3.7-4" fill="none" stroke="#bfe0ff" stroke-width="1.8"/>
<path d="M60.5 9.5l6 5-3 2.8v-12l3 2.8-6 5" fill="none" stroke="#fff" stroke-width="1.4"/>
<rect x="81" y="8" width="8" height="11" fill="none" stroke="#fff" stroke-width="1.4"/><path d="M86 7h6v7h-6z" fill="#fff"/><path d="M87.5 5v3M90.5 5v3M89 14v5" stroke="#fff" stroke-width="1.2"/>
<g fill="#fff"><rect x="104" y="16" width="2.2" height="2.3"/><rect x="107.3" y="14" width="2.2" height="4.3"/><rect x="110.6" y="11.5" width="2.2" height="6.8"/><rect x="113.9" y="9" width="2.2" height="9.3"/><rect x="117.2" y="7.5" width="2.2" height="10.8"/></g>
<path d="M130.5 10h3.5l5-4.5v15l-5-4.5h-3.5z" fill="#fff"/><path d="M140.5 10.5c1 1.5 1 3.5 0 5" fill="none" stroke="#cfe0f4" stroke-width="1"/>
</svg>
</body></html>
